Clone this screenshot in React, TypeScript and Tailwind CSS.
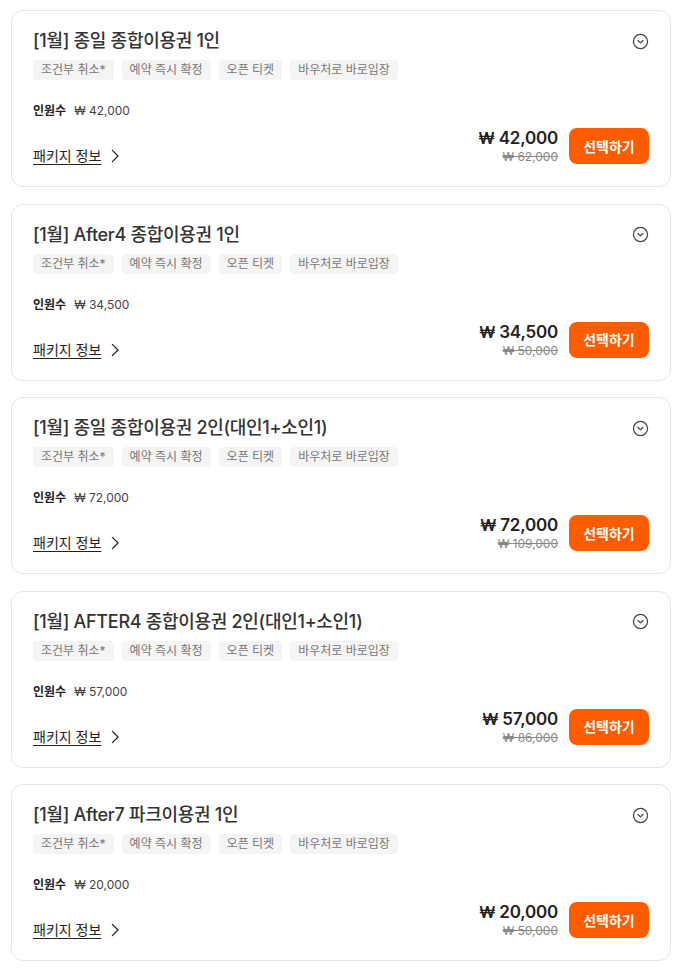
import React from "react";

type Item = { title: string; price: string; orig: string };

const items: Item[] = [
  { title: "[1월] 종일 종합이용권 1인", price: "42,000", orig: "62,000" },
  { title: "[1월] After4 종합이용권 1인", price: "34,500", orig: "50,000" },
  { title: "[1월] 종일 종합이용권 2인(대인1+소인1)", price: "72,000", orig: "109,000" },
  { title: "[1월] AFTER4 종합이용권 2인(대인1+소인1)", price: "57,000", orig: "86,000" },
  { title: "[1월] After7 파크이용권 1인", price: "20,000", orig: "50,000" },
];

const tags = ["조건부 취소*", "예약 즉시 확정", "오픈 티켓", "바우처로 바로입장"];

function CircleDown() {
  return (
    <svg width="17" height="17" viewBox="0 0 24 24" fill="none" stroke="#444" strokeWidth="1.8" strokeLinecap="round" strokeLinejoin="round">
      <circle cx="12" cy="12" r="10" />
      <path d="m8.5 10.5 3.5 3.5 3.5-3.5" />
    </svg>
  );
}

function ChevRight() {
  return (
    <svg width="16" height="16" viewBox="0 0 24 24" fill="none" stroke="#222" strokeWidth="1.8" strokeLinecap="round" strokeLinejoin="round">
      <path d="m8 3.5 8.5 8.5-8.5 8.5" />
    </svg>
  );
}

function Card({ item }: { item: Item }) {
  return (
    <div className="h-[177px] rounded-[12px] border border-[#e6e6e6] bg-white pl-[21px] pr-[21px] pt-[17px] flex flex-col">
      <div className="flex items-center justify-between h-[26px]">
        <div className="text-[18px] leading-[26px] font-medium text-[#333] tracking-[-0.3px]">{item.title}</div>
        <CircleDown />
      </div>
      <div className="mt-[6px] flex gap-[8px]">
        {tags.map((t) => (
          <span key={t} className="h-[20px] leading-[20px] px-[8px] rounded-[4px] bg-[#f4f4f4] text-[12px] text-[#777]">
            {t}
          </span>
        ))}
      </div>
      <div className="mt-[22px] flex items-center gap-[8px] h-[18px] text-[12px] leading-[18px]">
        <span className="font-bold text-[#222]">인원수</span>
        <span className="text-[#444]">₩ {item.price}</span>
      </div>
      <div className="mt-[7px] flex items-end justify-between">
        <a className="flex items-center gap-[6px] text-[14px] leading-[18px] text-[#222]">
          <span className="underline underline-offset-[3px]">패키지 정보</span>
          <ChevRight />
        </a>
        <div className="flex items-center gap-[11px]">
          <div className="flex flex-col items-end">
            <span className="text-[17px] leading-[22px] font-semibold text-[#222] tracking-[-0.2px]">
              <span className="text-[16px]">₩</span> {item.price}
            </span>
            <span className="text-[12px] leading-[16px] text-[#888] line-through">₩ {item.orig}</span>
          </div>
          <button className="w-[80px] h-[36px] rounded-[8px] bg-[#ff5c00] text-white text-[14px] font-bold">
            선택하기
          </button>
        </div>
      </div>
    </div>
  );
}

export default function App() {
  return (
    <div
      className="w-[684px] min-h-[968px] bg-white pt-[10px] pl-[11px] pr-[13px] flex flex-col gap-[16.5px]"
      style={{ fontFamily: 'Inter, "Noto Sans CJK KR", sans-serif' }}
    >
      {items.map((it) => (
        <Card key={it.title} item={it} />
      ))}
    </div>
  );
}
